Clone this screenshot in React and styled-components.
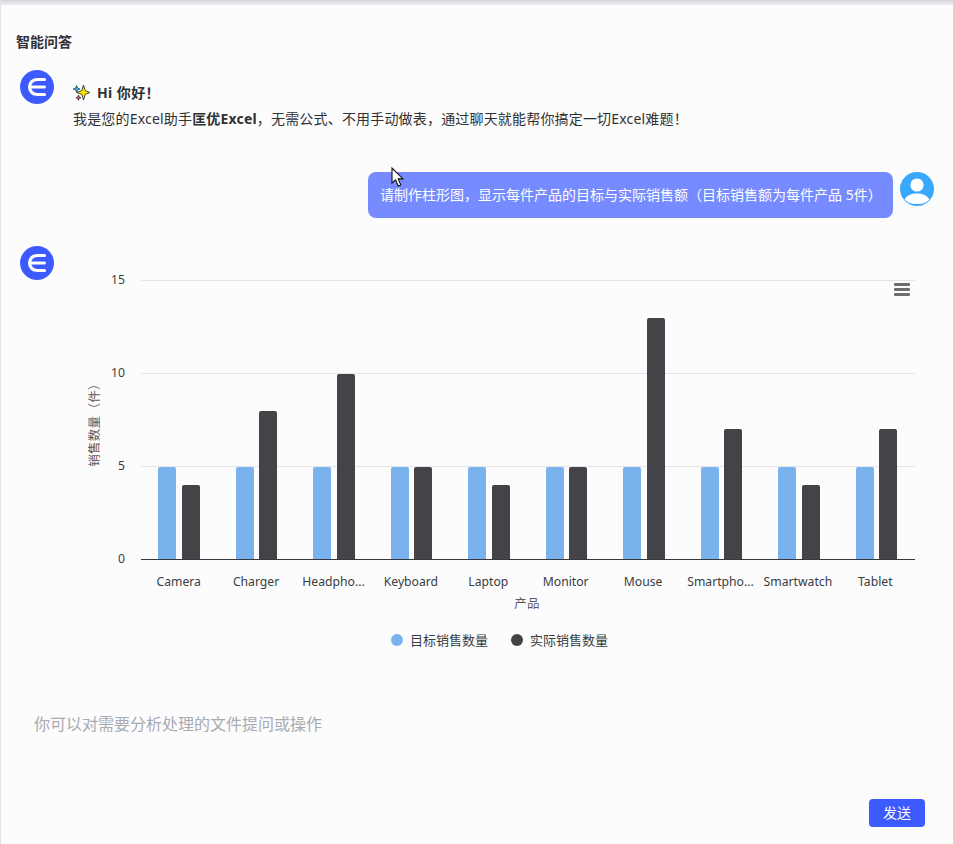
import React from 'react'
import styled, { createGlobalStyle } from 'styled-components'

const GlobalStyle = createGlobalStyle`
  html, body {
    margin: 0;
    padding: 0;
    background: #fcfcfd;
  }
  body {
    font-family: "Noto Sans", "Noto Sans CJK SC", sans-serif;
    color: #303133;
  }
`

const products = [
  { name: 'Camera', actual: 4 },
  { name: 'Charger', actual: 8 },
  { name: 'Headpho...', actual: 10 },
  { name: 'Keyboard', actual: 5 },
  { name: 'Laptop', actual: 4 },
  { name: 'Monitor', actual: 5 },
  { name: 'Mouse', actual: 13 },
  { name: 'Smartpho...', actual: 7 },
  { name: 'Smartwatch', actual: 4 },
  { name: 'Tablet', actual: 7 },
]

const TARGET = 5
const PLOT_LEFT = 141
const PLOT_RIGHT = 915
const PLOT_BOTTOM = 559
const UNIT = 18.6
const BAND = (PLOT_RIGHT - PLOT_LEFT) / products.length

const Page = styled.div`
  position: relative;
  box-sizing: border-box;
  height: 844px;
  overflow: hidden;
  border-left: 1px solid #e2e2e4;
`

const TopShade = styled.div`
  height: 5px;
  background: linear-gradient(#d6d6dc, #eeeef3);
`

const Title = styled.div`
  margin: 27px 0 18px 15px;
  font-size: 14px;
  line-height: 20px;
  font-weight: 700;
  color: #303133;
`

const Row = styled.div`
  display: flex;
  gap: ${(p) => (p.$mine ? '7px' : '19px')};
  justify-content: ${(p) => (p.$mine ? 'flex-end' : 'flex-start')};
  margin-top: ${(p) => p.$top || 0}px;
  padding: 0 19px;
`

const Avatar = styled.svg`
  flex: none;
  width: 34px;
  height: 34px;
`

const Intro = styled.div`
  padding-top: 12px;
  font-size: 14px;
`

const Greeting = styled.div`
  display: flex;
  align-items: center;
  gap: 7px;
  height: 20px;
  font-weight: 700;
  letter-spacing: 0.4px;
`

const IntroText = styled.div`
  margin-top: 7px;
  line-height: 20px;
  letter-spacing: 0.18px;
  white-space: nowrap;
`

const Bubble = styled.div`
  box-sizing: border-box;
  width: 525px;
  height: 46px;
  padding: 0 12px;
  border-radius: 8px;
  background: #758bff;
  color: #ffffff;
  font-size: 14px;
  line-height: 46px;
  white-space: nowrap;
`

const Chart = styled.svg`
  flex: none;
  display: block;
  font-family: "Noto Sans", "Noto Sans CJK SC", sans-serif;
`

const TickLabel = styled.text`
  font-size: 12.2px;
  fill: #373d3f;
`

const AxisTitle = styled.text`
  font-size: 12.5px;
  letter-spacing: 0.3px;
  fill: #5f5a58;
`

const LegendLabel = styled.text`
  font-size: 13px;
  fill: #373d3f;
`

const Composer = styled.div`
  margin-top: 56px;
  padding: 0 28px 0 33px;
`

const Placeholder = styled.div`
  height: 24px;
  font-size: 16px;
  line-height: 24px;
  color: #a8abb2;
`

const Actions = styled.div`
  display: flex;
  justify-content: flex-end;
  margin-top: 63px;
`

const SendButton = styled.button`
  width: 56px;
  height: 28px;
  padding: 0;
  border: none;
  border-radius: 4px;
  background: #3d5afe;
  color: #ffffff;
  font-family: inherit;
  font-size: 14px;
  line-height: 28px;
  cursor: pointer;
`

const Pointer = styled.svg`
  position: absolute;
  left: 390px;
  top: 167px;
  width: 14px;
  height: 21px;
`

function Logo() {
  return (
    <Avatar viewBox="0 0 34 34">
      <circle cx="17" cy="17" r="17" fill="#3d5afe" />
      <path d="M24.5 9.5H17A7.5 7.5 0 0 0 17 24.5H24.5" fill="none" stroke="#fff" strokeWidth="3.2" strokeLinecap="round" />
      <path d="M11.5 17H24.5" stroke="#fff" strokeWidth="3" strokeLinecap="round" />
    </Avatar>
  )
}

function UserAvatar() {
  return (
    <Avatar viewBox="0 0 34 34">
      <circle cx="17" cy="17" r="17" fill="#38a8ff" />
      <circle cx="17" cy="13" r="6.6" fill="#fff" />
      <path d="M4.6 27.5C7 23.4 11.5 21.6 17 21.6S27 23.4 29.4 27.5A15.4 15.4 0 0 1 17 32A15.4 15.4 0 0 1 4.6 27.5Z" fill="#fff" />
    </Avatar>
  )
}

function Sparkle() {
  return (
    <svg width="17" height="17" viewBox="0 0 17 17">
      <path d="M10.5 1L12.2 6.6L16.8 8.5L12.2 10.4L10.5 16L8.8 10.4L3.8 8.5L8.8 6.6Z" fill="#ffe600" stroke="#1d1d1d" strokeWidth="0.8" strokeLinejoin="round" />
      <path d="M3.6 1.5L4.6 4L7 5L4.6 6L3.6 8.5L2.6 6L.2 5L2.6 4Z" fill="#2fb4e6" stroke="#1d1d1d" strokeWidth=".6" />
      <path d="M5.5 11L6.2 13L8 13.7L6.2 14.4L5.5 16.4L4.8 14.4L3 13.7L4.8 13Z" fill="#d9569c" stroke="#1d1d1d" strokeWidth=".7" />
    </svg>
  )
}

function Bar({ x, value, color }) {
  // the bars stop one pixel under their grid line
  const top = Math.floor(PLOT_BOTTOM - value * UNIT + 1)
  return (
    <path
      d={`M${x} ${PLOT_BOTTOM}V${top + 2}Q${x} ${top} ${x + 2} ${top}H${x + 16}Q${x + 18} ${top} ${x + 18} ${top + 2}V${PLOT_BOTTOM}Z`}
      fill={color}
    />
  )
}

function SalesChart() {
  return (
    <Chart width="860" height="410" viewBox="73 246 860 410">
      {[5, 10, 15].map((tick) => (
        <line
          key={tick}
          x1={PLOT_LEFT}
          x2={PLOT_RIGHT}
          y1={PLOT_BOTTOM - tick * UNIT + 0.5}
          y2={PLOT_BOTTOM - tick * UNIT + 0.5}
          stroke="#e4e5e8"
        />
      ))}
      {[0, 5, 10, 15].map((tick) => (
        <TickLabel key={tick} x="125" y={PLOT_BOTTOM - tick * UNIT + 4} textAnchor="end">
          {tick}
        </TickLabel>
      ))}
      {products.map((item, i) => (
        <g key={item.name}>
          <Bar x={Math.round(158 + 77.5 * i)} value={TARGET} color="#7ab2ed" />
          <Bar x={Math.round(181.6 + 77.5 * i)} value={item.actual} color="#434348" />
          <TickLabel x={PLOT_LEFT + BAND * i + BAND / 2 - 1} y="586" textAnchor="middle">
            {item.name}
          </TickLabel>
        </g>
      ))}
      <line x1={PLOT_LEFT} x2={PLOT_RIGHT} y1={PLOT_BOTTOM + 0.5} y2={PLOT_BOTTOM + 0.5} stroke="#37383c" />
      <AxisTitle x="527" y="608" textAnchor="middle">产品</AxisTitle>
      <AxisTitle x="96" y="422" textAnchor="middle" dominantBaseline="middle" transform="rotate(-90 96 422)">
        销售数量（件）
      </AxisTitle>
      <circle cx="397" cy="640" r="6" fill="#7ab2ed" />
      <LegendLabel x="410" y="645">目标销售数量</LegendLabel>
      <circle cx="517" cy="640" r="6" fill="#434348" />
      <LegendLabel x="530" y="645">实际销售数量</LegendLabel>
      <rect x="894" y="283" width="16" height="3" rx="1" fill="#6e6e6e" />
      <rect x="894" y="288" width="16" height="3" rx="1" fill="#6e6e6e" />
      <rect x="894" y="293" width="16" height="3" rx="1" fill="#6e6e6e" />
    </Chart>
  )
}

export default function App() {
  return (
    <>
      <GlobalStyle />
      <Page>
        <TopShade />
        <Title>智能问答</Title>

        <Row>
          <Logo />
          <Intro>
            <Greeting><Sparkle /> Hi 你好！</Greeting>
            <IntroText>
              我是您的Excel助手<b>匡优Excel</b>，无需公式、不用手动做表，通过聊天就能帮你搞定一切Excel难题！
            </IntroText>
          </Intro>
        </Row>

        <Row $mine $top={43}>
          <Bubble>请制作柱形图，显示每件产品的目标与实际销售额（目标销售额为每件产品 5件）</Bubble>
          <UserAvatar />
        </Row>

        <Row $top={28}>
          <Logo />
          <SalesChart />
        </Row>

        <Composer>
          <Placeholder>你可以对需要分析处理的文件提问或操作</Placeholder>
          <Actions>
            <SendButton>发送</SendButton>
          </Actions>
        </Composer>

        <Pointer viewBox="0 0 14 21">
          <path d="M1 1V16L4.6 12.8L7.2 19L9.8 17.9L7.2 11.9H12Z" fill="#fff" stroke="#111" strokeWidth="1.1" />
        </Pointer>
      </Page>
    </>
  )
}
